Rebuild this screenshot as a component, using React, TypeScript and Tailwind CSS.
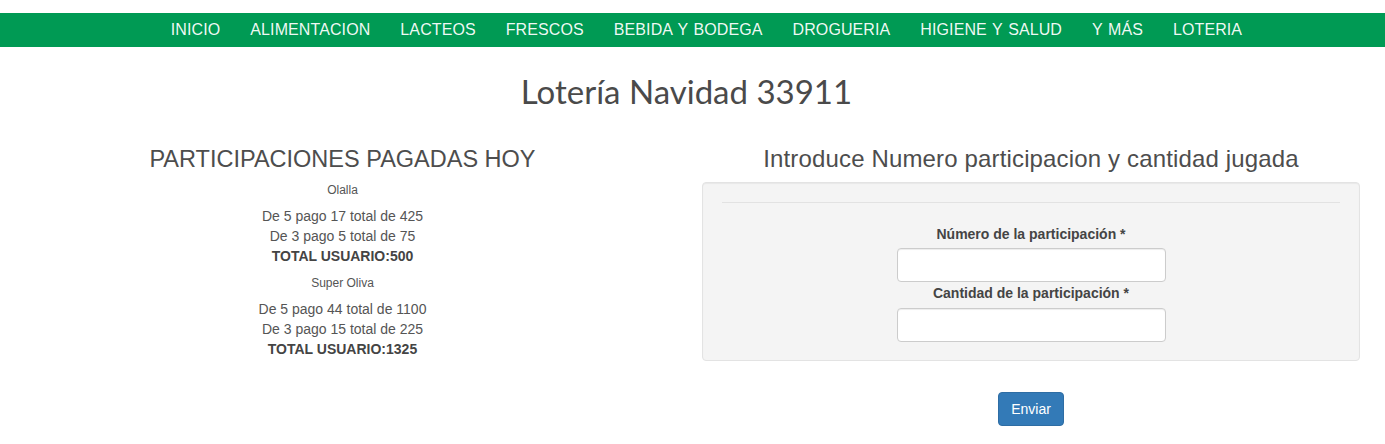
const NAV = ['INICIO', 'ALIMENTACION', 'LACTEOS', 'FRESCOS', 'BEBIDA Y BODEGA', 'DROGUERIA', 'HIGIENE Y SALUD', 'Y MÁS', 'LOTERIA'];

const USERS = [
  { name: 'Olalla', lines: ['De 5 pago 17 total de 425', 'De 3 pago 5 total de 75'], total: 500 },
  { name: 'Super Oliva', lines: ['De 5 pago 44 total de 1100', 'De 3 pago 15 total de 225'], total: 1325 },
];

export default function App() {
  return (
    <div className="min-h-[444px] bg-white text-[#555] font-['Liberation_Sans',Arial,sans-serif]">
      <div className="h-[13px]" />
      <nav className="h-[34px] bg-[#009a54] flex items-center justify-center gap-[30px] pl-[28px]">
        {NAV.map(item => (
          <a key={item} className="text-[16px] text-white/95 leading-none tracking-[0.1px] [word-spacing:1px]">{item}</a>
        ))}
      </nav>

      <h1 className="mt-[24px] pr-[12px] text-center text-[33px] leading-[40px] text-[#4a4a4a] font-['Lato',sans-serif]">Lotería Navidad 33911</h1>

      <div className="mt-[35px] flex">
        <div className="w-[685px] text-center">
          <h3 className="text-[23.5px] leading-[26px] text-[#4d4d4d]">PARTICIPACIONES PAGADAS HOY</h3>
          {USERS.map((u, i) => (
            <div key={u.name}>
              <div className={i === 0 ? 'mt-[10px] text-[12px] leading-[17px] text-[#555]' : 'mt-[9px] text-[12px] leading-[17px] text-[#555]'}>{u.name}</div>
              <div className="mt-[7px] text-[14px] leading-[20px] text-[#555]">
                {u.lines.map(l => <div key={l}>{l}</div>)}
                <div className="font-bold text-[#444]">TOTAL USUARIO:{u.total}</div>
              </div>
            </div>
          ))}
        </div>

        <div className="ml-[17px] w-[658px]">
          <h3 className="text-center text-[24px] leading-[26px] text-[#4d4d4d] tracking-[0.15px]">Introduce Numero participacion y cantidad jugada</h3>
          <div className="mt-[10px] h-[179px] bg-[#f4f4f4] border border-[#e3e3e3] rounded-[4px] px-[19px] shadow-[inset_0_1px_1px_rgba(0,0,0,0.05)]">
            <hr className="mt-[19px] border-t border-[#e2e2e2]" />
            <div className="flex flex-col items-center">
              <label className="mt-[21px] text-[14px] leading-[20px] font-bold text-[#444]">Número de la participación *</label>
              <input className="mt-[4px] w-[269px] h-[34px] bg-white border border-[#ccc] rounded-[4px] shadow-[inset_0_1px_1px_rgba(0,0,0,0.075)]" />
              <label className="mt-[1px] text-[14px] leading-[20px] font-bold text-[#444]">Cantidad de la participación *</label>
              <input className="mt-[5px] w-[269px] h-[34px] bg-white border border-[#ccc] rounded-[4px] shadow-[inset_0_1px_1px_rgba(0,0,0,0.075)]" />
            </div>
          </div>
          <div className="mt-[31px] flex justify-center">
            <button className="w-[66px] h-[34px] bg-[#337ab7] border border-[#2e6da4] rounded-[4px] text-white text-[14px]">Enviar</button>
          </div>
        </div>
      </div>
    </div>
  );
}
